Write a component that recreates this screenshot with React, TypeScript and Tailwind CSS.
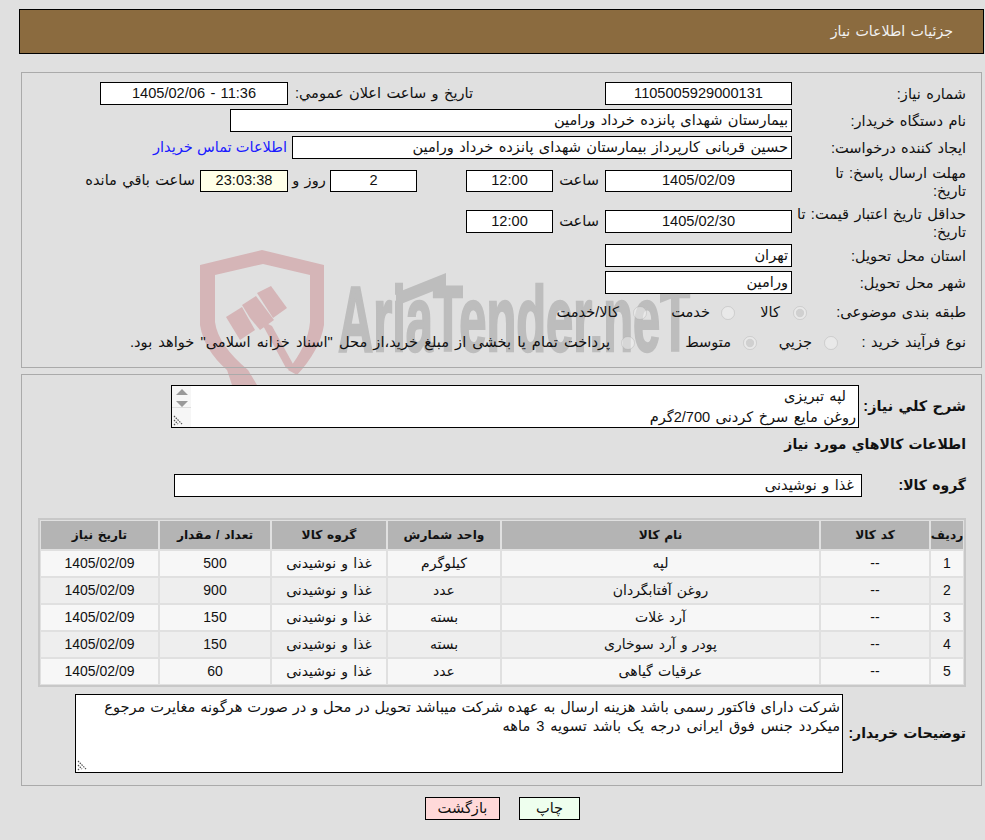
import React from 'react';

const FONT = 'font-["Liberation_Sans","DejaVu_Sans",sans-serif]';

const items = [
  { id: 1, name: 'لپه', unit: 'کیلوگرم', qty: '500' },
  { id: 2, name: 'روغن آفتابگردان', unit: 'عدد', qty: '900' },
  { id: 3, name: 'آرد غلات', unit: 'بسته', qty: '150' },
  { id: 4, name: 'پودر و آرد سوخاری', unit: 'بسته', qty: '150' },
  { id: 5, name: 'عرقیات گیاهی', unit: 'عدد', qty: '60' },
];

const Field = ({ className = '', children }: { className?: string; children: React.ReactNode }) => (
  <div className={`flex items-center border border-black px-[3px] whitespace-nowrap overflow-hidden ${className}`}>
    {children}
  </div>
);

const Center = ({ className = 'bg-white', size, children }: { className?: string; size: string; children: React.ReactNode }) => (
  <Field className={`justify-center ${size} ${className}`}>
    <span dir="ltr">{children}</span>
  </Field>
);

const Label = ({ children }: { children: React.ReactNode }) => (
  <div className="w-[174px] shrink-0 leading-[18px]">{children}</div>
);

const Radio = ({ name, checked }: { name: string; checked?: boolean }) => (
  <input type="radio" name={name} disabled defaultChecked={checked} className="m-0 h-[14px] w-[14px] shrink-0 opacity-70" />
);

const Grip = () => (
  <svg className="absolute bottom-[1px] left-[1px]" width="11" height="11" viewBox="0 0 11 11">
    <path d="M1 1 L9 9 M1 5 L5 9 M1 9 L2 10" stroke="#555" strokeWidth="1.2" strokeDasharray="1.5 1" fill="none" />
  </svg>
);

const Watermark = () => (
  <svg dir="ltr" className="absolute left-0 top-0 pointer-events-none" width="985" height="400" viewBox="0 0 985 400">
    <g fill="#d5b5b7">
      <path d="M200 265 L262 250 L324 265 L324 325 Q320 350 297 375 L288 370 Q308 345 310 322 L310 275 L263 264 L215 275 L215 322 Q218 345 248 370 L257 385 L232 385 L227 370 Q204 350 200 325 Z" />
      <path d="M226 317 L242 307 L255 330 L240 340 Z" />
      <path d="M242 305 L256 296 L274 320 L260 330 L250 318 Z" />
      <path d="M257 293 L271 286 L287 308 L273 318 Z" />
      <path d="M260 320 L272 326 L298 373 L286 368 Z" />
    </g>
    <g fill="#bdbdbd">
      <text x="338" y="351" direction="ltr" stroke="#bdbdbd" strokeWidth="2.5" fontFamily="Liberation Sans, sans-serif" fontWeight="700" fontSize="92" textLength="352" lengthAdjust="spacingAndGlyphs">
        AriaTender.neT
      </text>
      <path d="M396 293 L446 273 L446 286 L396 306 Z" />
      <path d="M660 292 L698 276 L698 288 L660 303 Z" />
    </g>
  </svg>
);

export default function App() {
  return (
    <div dir="rtl" className={`relative w-[985px] h-[840px] overflow-hidden bg-[#e0e0e0] text-[14.6px] text-[#111] [word-spacing:1.3px] ${FONT}`}>
      <Watermark />
      <div className="relative">
        <div className="mr-[1px] mt-[9px] flex h-[45px] w-[965px] items-center border border-black bg-[#8b6b3f] pr-[30px] text-[14.2px] text-[#f2f2f2]">
          جزئیات اطلاعات نیاز
        </div>

        <div className="mr-[3px] mt-[18px] h-[296px] w-[961px] border border-[#aaaaaa] pr-[15px] pt-[9px]">
          <div className="flex h-[23px] items-center">
            <Label>شماره نیاز:</Label>
            <Center size="h-[23px] w-[187px]">1105005929000131</Center>
            <div className="mr-[132px] w-[185px] whitespace-nowrap">تاریخ و ساعت اعلان عمومي:</div>
            <Center size="h-[23px] w-[188px]">1405/02/06 - 11:36</Center>
          </div>
          <div className="mt-[4px] flex h-[23px] items-center">
            <Label>نام دستگاه خریدار:</Label>
            <Field className="h-[23px] w-[562px] bg-white">بیمارستان شهدای پانزده خرداد ورامین</Field>
          </div>
          <div className="mt-[4px] flex h-[23px] items-center">
            <Label>ایجاد کننده درخواست:</Label>
            <Field className="h-[23px] w-[500px] bg-white">حسین قربانی کارپرداز بیمارستان شهدای پانزده خرداد ورامین</Field>
            <a className="mr-[5px] whitespace-nowrap text-[#1a1aff] [word-spacing:0px]">اطلاعات تماس خریدار</a>
          </div>
          <div className="mt-[5px] flex h-[36px] items-start">
            <Label>مهلت ارسال پاسخ: تا<br />تاریخ:</Label>
            <div className="mt-[6px] flex items-center">
              <Center size="h-[22px] w-[187px]">1405/02/09</Center>
              <div className="w-[52px] text-center">ساعت</div>
              <Center size="h-[22px] w-[87px]">12:00</Center>
              <Center size="mr-[49px] h-[22px] w-[87px]">2</Center>
              <div className="w-[42px] text-center">روز و</div>
              <Center size="h-[22px] w-[88px]" className="bg-[#ffffe8]">23:03:38</Center>
              <div className="mr-[5px] whitespace-nowrap">ساعت باقي مانده</div>
            </div>
          </div>
          <div className="mt-[5px] flex h-[36px] items-start">
            <Label>حداقل تاریخ اعتبار قیمت: تا<br />تاریخ:</Label>
            <div className="mt-[5px] flex items-center">
              <Center size="h-[23px] w-[187px]">1405/02/30</Center>
              <div className="w-[52px] text-center">ساعت</div>
              <Center size="h-[23px] w-[87px]">12:00</Center>
            </div>
          </div>
          <div className="mt-[3px] flex h-[23px] items-center">
            <Label>استان محل تحویل:</Label>
            <Field className="h-[23px] w-[187px] bg-white">تهران</Field>
          </div>
          <div className="mt-[4px] flex h-[23px] items-center">
            <Label>شهر محل تحویل:</Label>
            <Field className="h-[23px] w-[187px] bg-white">ورامین</Field>
          </div>
          <div className="mt-[9px] flex h-[20px] items-center">
            <div className="w-[159px] shrink-0">طبقه بندی موضوعی:</div>
            <div className="flex w-[72px] items-center gap-[13px]"><Radio name="kind" checked /><span>کالا</span></div>
            <div className="flex w-[88px] items-center gap-[11px]"><Radio name="kind" /><span>خدمت</span></div>
            <div className="flex items-center gap-[14px]"><Radio name="kind" /><span>کالا/خدمت</span></div>
          </div>
          <div className="mt-[10px] flex h-[20px] items-center">
            <div className="w-[128px] shrink-0">نوع فرآیند خرید :</div>
            <div className="flex w-[81px] items-center gap-[12px]"><Radio name="proc" /><span>جزيي</span></div>
            <div className="flex w-[122px] items-center gap-[12px]"><Radio name="proc" checked /><span>متوسط</span></div>
            <div className="flex items-center gap-[11px] whitespace-nowrap [word-spacing:2.1px]"><Radio name="proc" /><span>پرداخت تمام یا بخشی از مبلغ خرید،از محل "اسناد خزانه اسلامی" خواهد بود.</span></div>
          </div>
        </div>

        <div className="mr-[3px] mt-[6px] h-[412px] w-[961px] border border-[#aaaaaa] pr-[15px] pt-[10px]">
          <div className="flex items-center">
            <div className="w-[107px] shrink-0 text-[14.4px] font-bold">شرح کلي نياز:</div>
            <div className="relative h-[43px] w-[688px] overflow-hidden border border-black bg-white pr-[2px] leading-[21px]">
              <div className="pr-[10px]">لپه تبریزی</div>
              <div>روغن مایع سرخ کردنی 2/700گرم</div>
              <div className="absolute bottom-0 left-0 top-0 w-[19px] bg-[#f6f6f6]">
                <svg className="absolute left-[4px] top-[2px]" width="12" height="20" viewBox="0 0 12 20">
                  <path d="M6 1 L12 7 L0 7 Z M0 13 L12 13 L6 19 Z" fill="#999" />
                </svg>
                <div className="absolute left-0 right-0 top-[21px] h-px bg-[#dddddd]" />
                <Grip />
              </div>
            </div>
          </div>
          <div className="mt-[6px] h-[20px] text-[14px] font-bold leading-[20px]">اطلاعات کالاهاي مورد نياز</div>
          <div className="mt-[20px] flex items-center">
            <div className="w-[104px] shrink-0 text-[14px] font-bold">گروه کالا:</div>
            <Field className="h-[23px] w-[688px] bg-white pr-[7px]">غذا و نوشیدنی</Field>
          </div>
          <div className="mt-[21px] w-[928px] border-2 border-[#c8c8c8] p-px">
            <table className="w-[922px] table-fixed border-separate border-spacing-0 text-center text-[14px]">
              <thead>
                <tr className="h-[28px] text-[12.2px] font-bold">
                  <th className="w-[34px] pl-[2px]"><div className="flex h-[28px] items-center justify-center bg-[#b4b4b4]">ردیف</div></th>
                  <th className="w-[110px] pl-[2px]"><div className="flex h-[28px] items-center justify-center bg-[#b4b4b4]">کد کالا</div></th>
                  <th className="w-[319px] pl-[2px]"><div className="flex h-[28px] items-center justify-center bg-[#b4b4b4]">نام کالا</div></th>
                  <th className="w-[114px] pl-[2px]"><div className="flex h-[28px] items-center justify-center bg-[#b4b4b4]">واحد شمارش</div></th>
                  <th className="w-[116px] pl-[2px]"><div className="flex h-[28px] items-center justify-center bg-[#b4b4b4]">گروه کالا</div></th>
                  <th className="w-[112px] pl-[2px]"><div className="flex h-[28px] items-center justify-center bg-[#b4b4b4]">تعداد / مقدار</div></th>
                  <th className="w-[117px]"><div className="flex h-[28px] items-center justify-center bg-[#b4b4b4]">تاریخ نیاز</div></th>
                </tr>
              </thead>
              <tbody>
                {items.map((item) => {
                  const bg = item.id % 2 === 1 ? 'bg-[#f7f7f7]' : 'bg-[#eeeeee]';
                  const cell = `flex h-[25px] items-center justify-center ${bg}`;
                  return (
                    <tr key={item.id} className="h-[27px]">
                      <td className="pl-[2px] pt-[2px]"><div className={cell}>{item.id}</div></td>
                      <td className="pl-[2px] pt-[2px]"><div className={cell}>--</div></td>
                      <td className="pl-[2px] pt-[2px]"><div className={cell}>{item.name}</div></td>
                      <td className="pl-[2px] pt-[2px]"><div className={cell}>{item.unit}</div></td>
                      <td className="pl-[2px] pt-[2px]"><div className={cell}>غذا و نوشیدنی</div></td>
                      <td className="pl-[2px] pt-[2px]"><div className={cell}>{item.qty}</div></td>
                      <td className="pt-[2px]"><div className={cell}>1405/02/09</div></td>
                    </tr>
                  );
                })}
              </tbody>
            </table>
          </div>
          <div className="mt-[7px] flex items-center">
            <div className="w-[123px] shrink-0 whitespace-nowrap text-[14px] font-bold">توضیحات خریدار:</div>
            <div className="relative h-[79px] w-[768px] border border-black bg-white pr-[2px] pt-[3px] leading-[19px] [word-spacing:0.8px]">
              شرکت دارای فاکتور رسمی باشد هزینه ارسال به عهده شرکت میباشد تحویل در محل و در صورت هرگونه مغایرت مرجوع <span className="[word-spacing:1.9px]">میکردد جنس فوق ایرانی درجه یک باشد تسویه 3 ماهه</span>
              <Grip />
            </div>
          </div>
        </div>

        <div className="mr-[405px] mt-[11px] flex gap-[19px]">
          <button className="h-[23px] w-[61px] border border-black bg-[#eeffee]">چاپ</button>
          <button className="h-[23px] w-[75px] border border-black bg-[#ffd9d9]">بازگشت</button>
        </div>
      </div>
    </div>
  );
}
